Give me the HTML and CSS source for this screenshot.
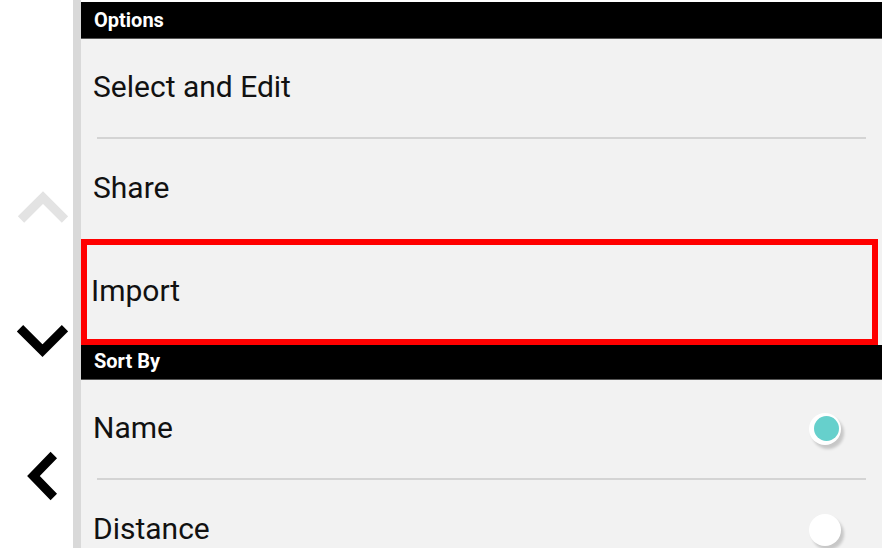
FILE: index.html
```html
<!DOCTYPE html>
<html>
<head>
  <title>Options</title>
  <link rel="stylesheet" href="styles.css">
</head>
<body>
  <div class="screen">
    <div class="nav">
      <div class="nav-btn">
        <svg width="60" height="56" viewBox="0 0 60 56"><polyline class="chev chev-off" points="13,40.5 35,18.5 57,40.5"/></svg>
      </div>
      <div class="nav-btn">
        <svg width="60" height="56" viewBox="0 0 60 56"><polyline class="chev" points="12,15.2 34.5,37.6 57,15.2"/></svg>
      </div>
      <div class="nav-btn">
        <svg width="60" height="56" viewBox="0 0 60 56"><polyline class="chev" points="45.8,8 25.4,29 45.8,50"/></svg>
      </div>
    </div>

    <div class="rail">
      <div class="panel">
        <div class="section-title">Options</div>
        <div class="item">Select and Edit</div>
        <div class="divider"></div>
        <div class="item">Share</div>
        <div class="item item-focus">Import</div>

        <div class="section-title section-title-sm">Sort By</div>
        <div class="item">
          <span>Name</span>
          <span class="radio"><span class="radio-dot"></span></span>
        </div>
        <div class="divider"></div>
        <div class="item">
          <span>Distance</span>
          <span class="radio"></span>
        </div>
      </div>
    </div>
  </div>
</body>
</html>
```

FILE: styles.css
```css
body {
  margin: 0;
  background: #ffffff;
  font-family: Roboto, "Liberation Sans", sans-serif;
  color: #111111;
  overflow: hidden;
}

.screen {
  display: flex;
  width: 883px;
  height: 548px;
}

.nav {
  width: 73px;
  display: flex;
  flex-direction: column;
  align-items: flex-start;
  padding-top: 179px;
  gap: 78px;
}

.nav-btn {
  display: flex;
  padding-left: 8px;
}

.chev {
  fill: none;
  stroke: #000000;
  stroke-width: 9;
  stroke-linecap: butt;
  stroke-linejoin: miter;
}

.chev-off {
  stroke: #e3e3e3;
}

.rail {
  width: 801px;
  border-left: 8px solid #d9d9d9;
  padding-top: 2px;
  margin-right: 1px;
}

.panel {
  background: #f2f2f2;
  height: 100%;
}

.section-title {
  height: 36px;
  line-height: 36px;
  background: #000000;
  color: #ffffff;
  font-size: 20px;
  font-weight: 700;
  padding-left: 13px;
  box-shadow: 0 1px 0 #555555;
}

.section-title-sm {
  height: 34px;
  line-height: 32px;
}

.item {
  height: 96px;
  display: flex;
  align-items: center;
  justify-content: space-between;
  padding: 0 41px 3px 12px;
  font-size: 30px;
}

.item-focus {
  height: 91px;
  margin-top: 1px;
  margin-right: 4px;
  border: 6px solid #ff0000;
  padding-left: 4px;
}

.divider {
  height: 2px;
  background: #d4d4d4;
  margin: 0 16px 0 16px;
}

.radio {
  width: 32px;
  height: 32px;
  margin-top: 3px;
  border-radius: 50%;
  background: #ffffff;
  box-shadow: 3px 4px 3px rgba(0, 0, 0, 0.18);
  display: flex;
  align-items: center;
  justify-content: center;
}

.radio-dot {
  width: 25px;
  height: 25px;
  border-radius: 50%;
  background: #66d0cc;
  margin-left: 3px;
}
```
